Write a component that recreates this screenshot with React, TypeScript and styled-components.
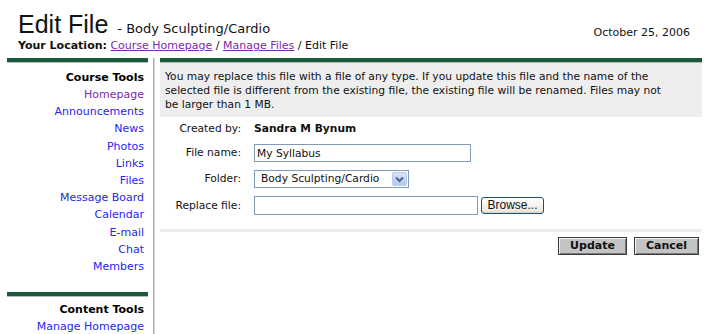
import React from "react";
import styled, { createGlobalStyle } from "styled-components";

const GlobalStyle = createGlobalStyle`
  html, body {
    margin: 0;
    padding: 0;
    background: #ffffff;
    overflow: hidden;
  }
  body {
    font-family: "DejaVu Sans", Verdana, sans-serif;
    color: #000;
  }
`;

const Page = styled.div`
  width: 714px;
  height: 334px;
  overflow: hidden;
`;

const Header = styled.header`
  display: flex;
  justify-content: space-between;
  align-items: flex-start;
  padding: 10px 0 0 18px;
`;

const HeaderLeft = styled.div`
  display: flex;
  flex-direction: column;
`;

const TitleLine = styled.div`
  display: flex;
  align-items: baseline;
  height: 28px;
`;

const Title = styled.h1`
  margin: 0;
  font: normal 25px/28px "Liberation Sans", Arial, sans-serif;
  color: #111;
`;

const Subtitle = styled.span`
  margin-left: 9px;
  font: 13px/28px "DejaVu Sans", Verdana, sans-serif;
  color: #111;
`;

const Location = styled.div`
  margin-top: 1px;
  font: 11px/14px "DejaVu Sans", Verdana, sans-serif;
  color: #111;
`;

const LocationLabel = styled.span`
  font-weight: bold;
`;

const CrumbLink = styled.a`
  color: #7d2aa8;
  text-decoration: underline;
`;

const DateText = styled.div`
  margin: 16px 24px 0 0;
  font: 11px/14px "DejaVu Sans", Verdana, sans-serif;
  color: #111;
`;

const Layout = styled.div`
  display: flex;
  align-items: stretch;
  margin-top: 5px;
  height: 276px;
`;

const SideBar = styled.nav`
  flex: none;
  width: 141px;
  margin-left: 7px;
`;

const GreenRule = styled.div<{ $gap?: number }>`
  height: 4px;
  margin-top: ${(p) => p.$gap ?? 0}px;
  background: #195a3c;
  border-bottom: 1px solid #b9b9b9;
`;

const SideHeading = styled.div<{ $top?: number }>`
  padding: ${(p) => p.$top ?? 6}px 4px 0 0;
  text-align: right;
  font: bold 11px/17px "DejaVu Sans", Verdana, sans-serif;
  color: #000;
`;

const SideLink = styled.a<{ $visited?: boolean }>`
  display: block;
  padding-right: 4px;
  text-align: right;
  font: 11px/17.2px "DejaVu Sans", Verdana, sans-serif;
  color: ${(p) => (p.$visited ? "#7d2aa8" : "#2626ee")};
  text-decoration: none;
`;

const Divider = styled.div`
  flex: none;
  width: 0;
  margin: 0 5px;
  border-left: 1px solid #a8a8a8;
  border-right: 1px solid #dcdcdc;
`;

const Content = styled.main`
  flex: none;
  width: 542px;
`;

const InfoBox = styled.div`
  background: #eeeeee;
  padding: 7px 5px 5px 5px;
`;

const InfoText = styled.p`
  margin: 0;
  max-width: 502px;
  font: 10.7px/14px "DejaVu Sans", Verdana, sans-serif;
  color: #111;
`;

const FormGrid = styled.div`
  display: grid;
  grid-template-columns: 81px auto;
  column-gap: 13px;
  row-gap: 8px;
  align-items: center;
  padding-top: 5px;
`;

const Label = styled.div`
  text-align: right;
  font: 10.7px/14px "DejaVu Sans", Verdana, sans-serif;
  color: #111;
`;

const Value = styled.div`
  font: bold 10.7px/14px "DejaVu Sans", Verdana, sans-serif;
  color: #111;
`;

const TextInput = styled.input<{ $width: number; $height?: number }>`
  box-sizing: border-box;
  width: ${(p) => p.$width}px;
  height: ${(p) => p.$height ?? 18}px;
  margin: 0;
  padding: 0 2px;
  border: 1px solid #7f9db9;
  background: #fff;
  font: 10.7px "DejaVu Sans", Verdana, sans-serif;
  color: #111;
  outline: none;
`;

const SelectBox = styled.div`
  box-sizing: border-box;
  display: flex;
  align-items: center;
  width: 155px;
  height: 18px;
  border: 1px solid #7f9db9;
  background: #fff;
`;

const SelectText = styled.span`
  flex: 1;
  padding-left: 6px;
  font: 10.7px/16px "DejaVu Sans", Verdana, sans-serif;
  color: #111;
  white-space: nowrap;
`;

const ArrowBox = styled.span`
  box-sizing: border-box;
  display: flex;
  align-items: center;
  justify-content: center;
  width: 15px;
  height: 14px;
  margin-right: 1px;
  border: 1px solid #b7c9f0;
  border-radius: 2px;
  background: linear-gradient(#d8e3fb, #b5c9f3);
`;

const FileRow = styled.div`
  display: flex;
  align-items: center;
`;

const BrowseButton = styled.button`
  box-sizing: border-box;
  width: 63px;
  height: 17px;
  margin-left: 3px;
  padding: 0;
  border: 1px solid #1d4f7c;
  border-radius: 3px;
  background: linear-gradient(#ffffff, #ece9e0 85%, #d6d2c2);
  font: 12px/15px "Liberation Sans", Arial, sans-serif;
  color: #111;
`;

const Separator = styled.div`
  height: 3px;
  margin-top: 14px;
  background: #ececec;
`;

const ButtonRow = styled.div`
  display: flex;
  justify-content: flex-end;
  gap: 7px;
  padding: 5px 3px 0 0;
`;

const ActionButton = styled.button`
  box-sizing: border-box;
  height: 18px;
  padding: 0 11px;
  border: 1px solid #3a3a3a;
  background: #c4c4c4;
  box-shadow: inset 1px 1px 0 #f2f2f2, inset -1px -1px 0 #7a7a7a;
  font: bold 11px/14px "DejaVu Sans", Verdana, sans-serif;
  color: #111;
`;

const courseTools = [
  "Homepage",
  "Announcements",
  "News",
  "Photos",
  "Links",
  "Files",
  "Message Board",
  "Calendar",
  "E-mail",
  "Chat",
  "Members",
];

export default function App() {
  return (
    <Page>
      <GlobalStyle />
      <Header>
        <HeaderLeft>
          <TitleLine>
            <Title>Edit File</Title>
            <Subtitle>- Body Sculpting/Cardio</Subtitle>
          </TitleLine>
          <Location>
            <LocationLabel>Your Location:</LocationLabel>{" "}
            <CrumbLink href="#">Course Homepage</CrumbLink> /{" "}
            <CrumbLink href="#">Manage Files</CrumbLink> / Edit File
          </Location>
        </HeaderLeft>
        <DateText>October 25, 2006</DateText>
      </Header>
      <Layout>
        <SideBar>
          <GreenRule />
          <SideHeading>Course Tools</SideHeading>
          {courseTools.map((t, i) => (
            <SideLink key={t} href="#" $visited={i === 0}>
              {t}
            </SideLink>
          ))}
          <GreenRule $gap={17} />
          <SideHeading $top={4}>Content Tools</SideHeading>
          <SideLink href="#">Manage Homepage</SideLink>
        </SideBar>
        <Divider />
        <Content>
          <GreenRule />
          <InfoBox>
            <InfoText>
              You may replace this file with a file of any type. If you update
              this file and the name of the selected file is different from the
              existing file, the existing file will be renamed. Files may not be
              larger than 1 MB.
            </InfoText>
          </InfoBox>
          <FormGrid>
            <Label>Created by:</Label>
            <Value>Sandra M Bynum</Value>
            <Label>File name:</Label>
            <TextInput $width={217} defaultValue="My Syllabus" />
            <Label>Folder:</Label>
            <SelectBox>
              <SelectText>Body Sculpting/Cardio</SelectText>
              <ArrowBox>
                <svg width="9" height="7" viewBox="0 0 9 7">
                  <path
                    d="M1 1.5 L4.5 5 L8 1.5"
                    fill="none"
                    stroke="#4d6185"
                    strokeWidth="2"
                  />
                </svg>
              </ArrowBox>
            </SelectBox>
            <Label>Replace file:</Label>
            <FileRow>
              <TextInput $width={224} $height={19} />
              <BrowseButton>Browse...</BrowseButton>
            </FileRow>
          </FormGrid>
          <Separator />
          <ButtonRow>
            <ActionButton>Update</ActionButton>
            <ActionButton>Cancel</ActionButton>
          </ButtonRow>
        </Content>
      </Layout>
    </Page>
  );
}
